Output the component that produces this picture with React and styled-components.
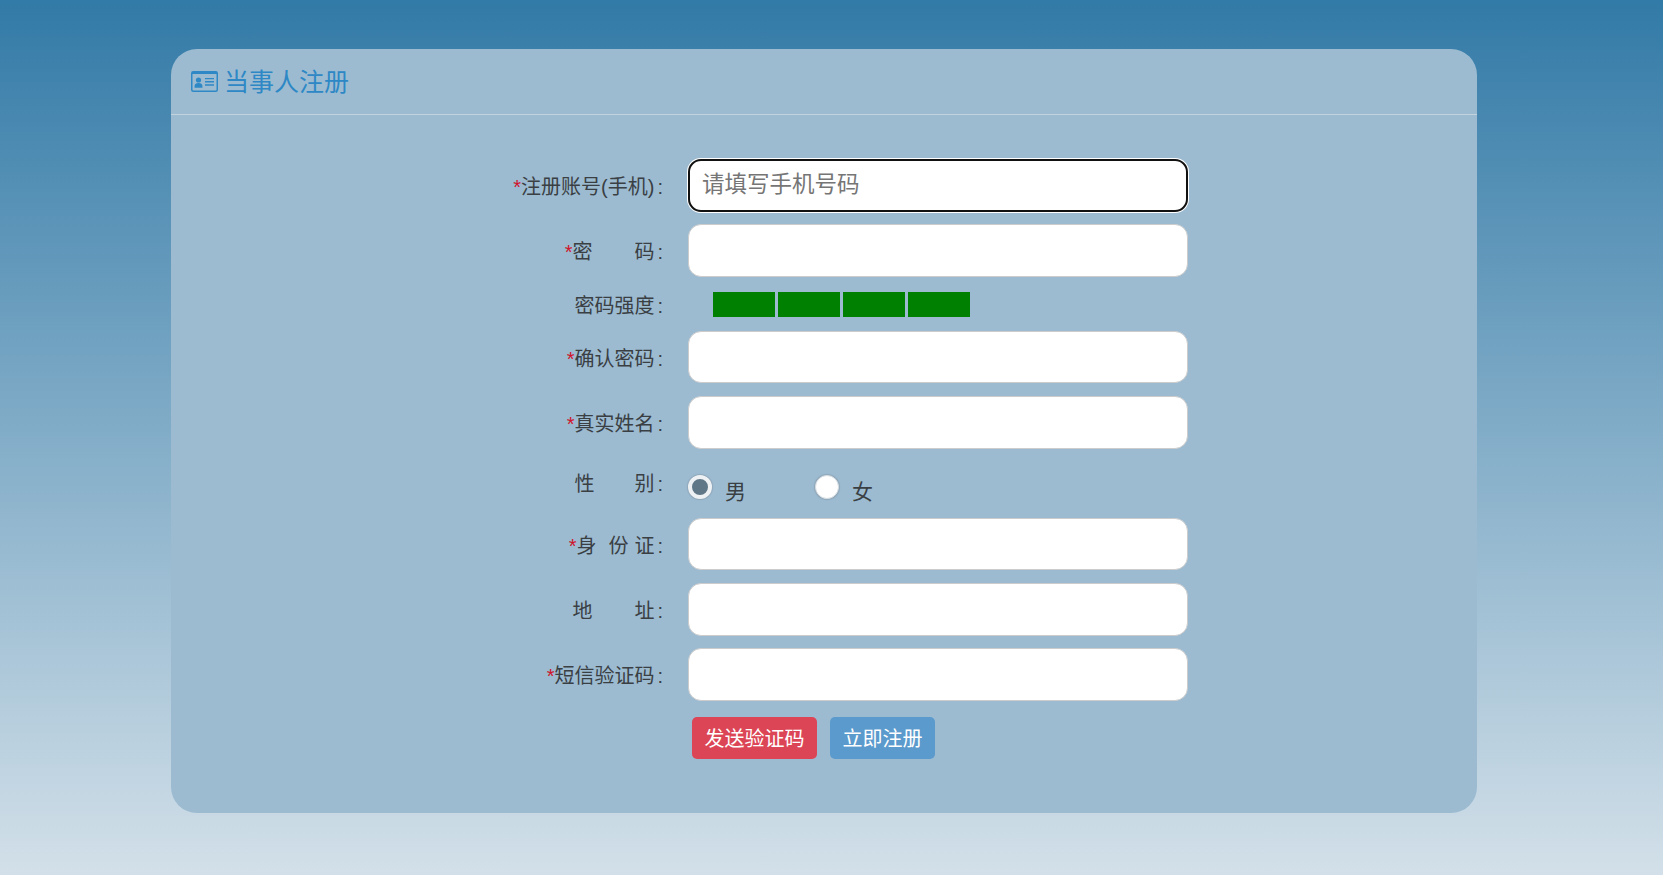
import React from "react"
import styled, { createGlobalStyle } from "styled-components"

const GlobalStyle = createGlobalStyle`
  html, body {
    margin: 0;
    padding: 0;
    height: 100%;
  }
  body {
    font-family: "Liberation Sans", "Noto Sans CJK SC", sans-serif;
    color: #3a3f44;
    overflow: hidden;
  }
`

const Page = styled.div`
  height: 875px;
  padding: 49px 0 0 171px;
  box-sizing: border-box;
  background: linear-gradient(to bottom, #327aa7 0%, #d3e0e9 100%);
`

const Card = styled.div`
  width: 1306px;
  height: 764px;
  border-radius: 26px;
  background: #9cbbd1;
  overflow: hidden;
`

const Header = styled.div`
  display: flex;
  align-items: center;
  gap: 6px;
  padding: 0 0 4px 20px;
  box-sizing: border-box;
  height: 66px;
  border-bottom: 1px solid #c3d3dd;
  color: #2d88c5;
  font-size: 25px;
  svg {
    margin-top: 4px;
  }
`

const Form = styled.form`
  padding-top: 44px;
`

const Row = styled.div`
  display: flex;
  align-items: ${props => (props.$top ? "flex-start" : "center")};
  height: ${props => props.$height || 52.7}px;
  margin-bottom: ${props => props.$gap || 12.55}px;
`

const Label = styled.label`
  width: 492px;
  box-sizing: border-box;
  flex: none;
  text-align: right;
  font-size: 20px;
  line-height: ${props => (props.$lineHeight ? props.$lineHeight + "px" : "normal")};
  white-space: nowrap;
  &::after {
    content: ":";
    margin-left: 3px;
  }
`

const Star = styled.span`
  color: #d0142c;
`

const Gap = styled.span`
  display: inline-block;
  width: ${props => props.$width}px;
`

const Input = styled.input`
  width: 500px;
  height: 52.7px;
  margin-left: 25px;
  padding: 0 12px;
  box-sizing: border-box;
  border: 1px solid #ccc;
  border-radius: 13px;
  background: #fff;
  font-family: inherit;
  font-size: 22.5px;
  outline: none;
  ${props =>
    props.$focused &&
    `
    border: 2px solid #111;
    box-shadow: 0 0 0 1px #fff;
  `}
  &::placeholder {
    color: #757575;
  }
`

const Strength = styled.div`
  display: flex;
  gap: 3px;
  margin-left: 50px;
`

const StrengthBar = styled.span`
  width: 62px;
  height: 25px;
  background: green;
`

const Radios = styled.div`
  display: flex;
  margin-left: 25px;
`

const RadioItem = styled.span`
  display: flex;
  width: 127px;
  gap: 13px;
  font-size: 21px;
  line-height: 28px;
`

const RadioText = styled.span`
  padding-top: 17px;
`

const RadioCircle = styled.span`
  width: 24px;
  height: 24px;
  margin-top: 14px;
  box-sizing: border-box;
  border-radius: 50%;
  background: ${props => (props.$checked ? "#5f7787" : "#fff")};
  border: ${props => (props.$checked ? "4px solid #eef1f3" : "1px solid #d5dde2")};
  box-shadow: 0 0 1px 1px rgba(120, 130, 140, 0.35);
`

const Actions = styled.div`
  display: flex;
  gap: 13px;
  margin: 16px 0 0 521px;
`

const Button = styled.button`
  height: 42px;
  padding: 0 12.5px;
  border: none;
  border-radius: 5px;
  background: ${props => (props.$danger ? "#dc4556" : "#5b9acc")};
  color: #fff;
  font-family: inherit;
  font-size: 20px;
`

const CardIcon = () => (
  <svg width="27" height="21" viewBox="0 0 27 21" fill="none">
    <rect x="0.75" y="0.75" width="25.5" height="19.5" rx="1.5" stroke="currentColor" strokeWidth="1.5" />
    <rect x="1" y="1" width="25" height="2" fill="currentColor" />
    <circle cx="7.5" cy="9" r="2.6" fill="currentColor" />
    <path d="M3.6 16.8v-1.8c0-1.9 1.4-2.9 3.9-2.9s3.9 1 3.9 2.9v1.8z" fill="currentColor" />
    <path d="M14 7.6h9M14 10.8h9M14 14h9" stroke="currentColor" strokeWidth="1.4" />
  </svg>
)

const Field = ({ required, placeholder, focused, children }) => (
  <Row>
    <Label>
      {required && <Star>*</Star>}
      {children}
    </Label>
    <Input placeholder={placeholder} $focused={focused} />
  </Row>
)

const App = () => {
  return (
    <Page>
      <GlobalStyle />
      <Card>
        <Header>
          <CardIcon />
          当事人注册
        </Header>
        <Form>
          <Field required placeholder="请填写手机号码" focused>注册账号(手机)</Field>
          <Field required>密<Gap $width={42} />码</Field>
          <Row $height={30} $gap={11.25}>
            <Label>密码强度</Label>
            <Strength>
              <StrengthBar />
              <StrengthBar />
              <StrengthBar />
              <StrengthBar />
            </Strength>
          </Row>
          <Field required>确认密码</Field>
          <Field required>真实姓名</Field>
          <Row $top $height={44}>
            <Label $lineHeight={47}>性<Gap $width={40} />别</Label>
            <Radios>
              <RadioItem>
                <RadioCircle $checked />
                <RadioText>男</RadioText>
              </RadioItem>
              <RadioItem>
                <RadioCircle />
                <RadioText>女</RadioText>
              </RadioItem>
            </Radios>
          </Row>
          <Field required>身<Gap $width={12} />份<Gap $width={6} />证</Field>
          <Field>地<Gap $width={42} />址</Field>
          <Field required>短信验证码</Field>
          <Actions>
            <Button type="button" $danger>发送验证码</Button>
            <Button type="button">立即注册</Button>
          </Actions>
        </Form>
      </Card>
    </Page>
  )
}

export default App
